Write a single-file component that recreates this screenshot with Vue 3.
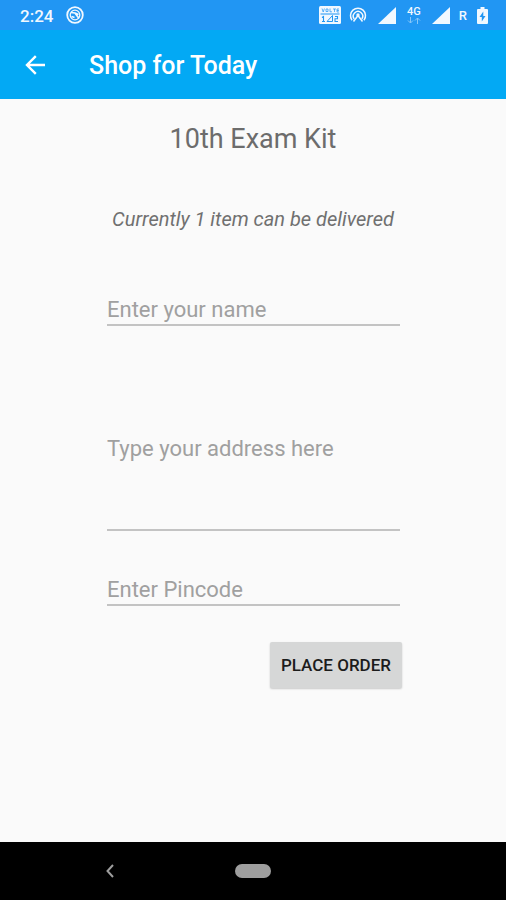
<script setup>
import { ref } from 'vue'

const name = ref('')
const address = ref('')
const pincode = ref('')
</script>

<template>
  <div class="screen">
    <div class="status-bar">
      <span class="clock">2:24</span>
      <svg class="app-icon" width="18" height="18" viewBox="0 0 18 18" fill="none" stroke="currentColor">
        <circle cx="9" cy="9" r="7.8" stroke-width="1.8" />
        <circle cx="9" cy="9" r="4.8" stroke-width="1.3" />
        <path d="M5 6.500l4 .5 4 5.500M9 7l3.500 1.500M5.500 10.500l3 1" stroke-width="1.700" />
      </svg>
      <div class="indicators">
        <svg class="volte" width="22" height="18" viewBox="0 0 22 18">
          <rect width="22" height="18" rx="1.5" fill="currentColor" />
          <g fill="none" stroke="#2196f3">
            <path d="M3 2.500l1.200 3.500 1.200-3.500M7 3h2v2.500H7zM11 2.500v3.300h2M14 3h3M15.500 3v3M20 3h-2v3h2M18 4.500h2" stroke-width=".7" />
            <path d="M1.500 8h19" stroke-width="1" />
            <path d="M3 11.500l1.500-1v5M3 15.500h3M16 10.500h2.500v2.300H16v2.700h3" stroke-width="1.100" />
            <path d="M8 15.500h5.500v-6z" stroke-width="1" />
          </g>
        </svg>
        <svg class="hotspot" width="18" height="18" viewBox="0 0 18 18" fill="none" stroke="currentColor" stroke-width="1.500">
          <path d="M3 14.200a7.500 7.500 0 1 1 12 0" />
          <path d="M5.200 13a4.700 4.700 0 1 1 7.600 0" />
          <path d="M4.500 15.500L9 9.500l4.500 6" stroke-width="1.500" />
          <circle cx="9" cy="9" r="1.700" fill="currentColor" stroke="none" />
        </svg>
        <svg class="signal" width="18" height="17" viewBox="0 0 18 17"><path d="M18 0v17H0z" fill="currentColor" /></svg>
        <div class="network">
          <span>4G</span>
          <svg width="14" height="7" viewBox="0 0 14 7" fill="none" stroke="currentColor" stroke-width="1">
            <path d="M3.500 0v6M1 3.500l2.500 2.500L6 3.500M10.500 7V1M8 3.500L10.500 1 13 3.500" />
          </svg>
        </div>
        <svg class="signal" width="18" height="17" viewBox="0 0 18 17"><path d="M18 0v17H0z" fill="currentColor" /></svg>
        <span class="roaming">R</span>
        <svg class="battery" width="11" height="17" viewBox="0 0 11 17">
          <path d="M3.500 0h4v2H10q1 0 1 1v13q0 1-1 1H1q-1 0-1-1V3q0-1 1-1h2.500z" fill="currentColor" />
          <path d="M6.300 4.500L2.500 10h2.300v4.500L8.500 9H6.300z" fill="#2196f3" />
        </svg>
      </div>
    </div>

    <header class="app-bar">
      <button class="back" type="button" aria-label="Back">
        <svg width="20" height="20" viewBox="0 0 20 20" fill="none" stroke="currentColor" stroke-width="2.400">
          <path d="M20 10H2.500M10.800 1.200L2 10l8.800 8.800" />
        </svg>
      </button>
      <h1>Shop for Today</h1>
    </header>

    <main>
      <h2>10th Exam Kit</h2>
      <p class="notice">Currently 1 item can be delivered</p>
      <form @submit.prevent>
        <input v-model="name" class="field name" type="text" placeholder="Enter your name" aria-label="Enter your name">
        <textarea v-model="address" class="field address" placeholder="Type your address here" aria-label="Type your address here"></textarea>
        <input v-model="pincode" class="field" type="text" inputmode="numeric" placeholder="Enter Pincode" aria-label="Enter Pincode">
        <button class="order" type="submit">PLACE ORDER</button>
      </form>
    </main>

    <nav class="nav-bar">
      <button class="nav-back" type="button" aria-label="Navigate back">
        <svg width="8" height="14" viewBox="0 0 8 14" fill="none" stroke="currentColor" stroke-width="2">
          <path d="M7 1L1.500 7 7 13" />
        </svg>
      </button>
      <button class="home" type="button" aria-label="Home"></button>
    </nav>
  </div>
</template>

<style>
body {
  margin: 0;
}
</style>

<style scoped>
.screen {
  display: flex;
  flex-direction: column;
  min-height: 100vh;
  background: #fafafa;
  font-family: Roboto, sans-serif;
}

button {
  padding: 0;
  border: 0;
  background: none;
  color: inherit;
  font-family: inherit;
}

svg {
  display: block;
  flex: none;
}

.status-bar {
  display: flex;
  align-items: center;
  height: 30px;
  padding: 0 18px 0 20px;
  background: #2196f3;
  color: #f1f8ff;
}

.clock {
  padding-top: 2px;
  font-size: 17px;
  font-weight: 500;
  line-height: 28px;
}

.app-icon {
  margin-left: 13px;
}

.indicators {
  display: flex;
  align-items: center;
  margin-left: auto;
}

.hotspot {
  margin: 0 11px 0 8px;
}

.network {
  display: flex;
  flex-direction: column;
  align-items: center;
  width: 16px;
  margin: 0 10px;
  font-size: 11px;
  font-weight: 500;
  line-height: 11px;
}

.network svg {
  opacity: 0.5;
}

.roaming {
  margin: 0 10px 0 9px;
  padding-top: 2px;
  font-size: 13px;
  font-weight: 500;
  line-height: 28px;
}

.app-bar {
  display: flex;
  align-items: center;
  gap: 44px;
  height: 69px;
  padding: 0 25px;
  background: #03a9f4;
  color: #fff;
}

h1 {
  margin: 0;
  padding-top: 2px;
  font-size: 25px;
  font-weight: 500;
  line-height: 36px;
}

main {
  flex: 1;
  padding: 22px 104px;
}

h2 {
  margin: 0;
  color: #6c6c6c;
  font-size: 27px;
  font-weight: 400;
  line-height: 36px;
  text-align: center;
}

.notice {
  margin: 50px 0 0;
  color: #707070;
  font-size: 20px;
  font-style: italic;
  line-height: 24px;
  text-align: center;
  white-space: nowrap;
}

form {
  display: flex;
  flex-direction: column;
  margin-top: 63px;
}

.field {
  height: 32px;
  margin: 0 2px 0 3px;
  padding: 0;
  border: 0;
  border-bottom: 2px solid #c3c3c3;
  border-radius: 0;
  outline: none;
  background: transparent;
  color: #212121;
  font-family: inherit;
  font-size: 22px;
  line-height: 30px;
  box-sizing: border-box;
  resize: none;
}

.field::placeholder {
  color: #a0a0a0;
  opacity: 1;
}

.field:focus {
  border-color: #03a9f4;
}

.address {
  height: 97px;
  margin-top: 108px;
  margin-bottom: 43px;
}

.order {
  align-self: flex-end;
  height: 46px;
  margin-top: 36px;
  padding: 0 11px;
  border-radius: 2px;
  background: #d6d7d7;
  box-shadow: 0 1px 2px rgba(0, 0, 0, 0.2);
  color: #1c1c1c;
  font-size: 17px;
  font-weight: 500;
  line-height: 24px;
}

.nav-bar {
  display: grid;
  grid-template-columns: 1fr 36px 1fr;
  align-items: center;
  height: 58px;
  background: #000;
  color: #9e9e9e;
}

.nav-back {
  justify-self: center;
  padding: 0 8px;
  margin-right: 16px;
}

.home {
  grid-column: 2;
  height: 14px;
  border-radius: 7px;
  background: #9e9e9e;
}
</style>
